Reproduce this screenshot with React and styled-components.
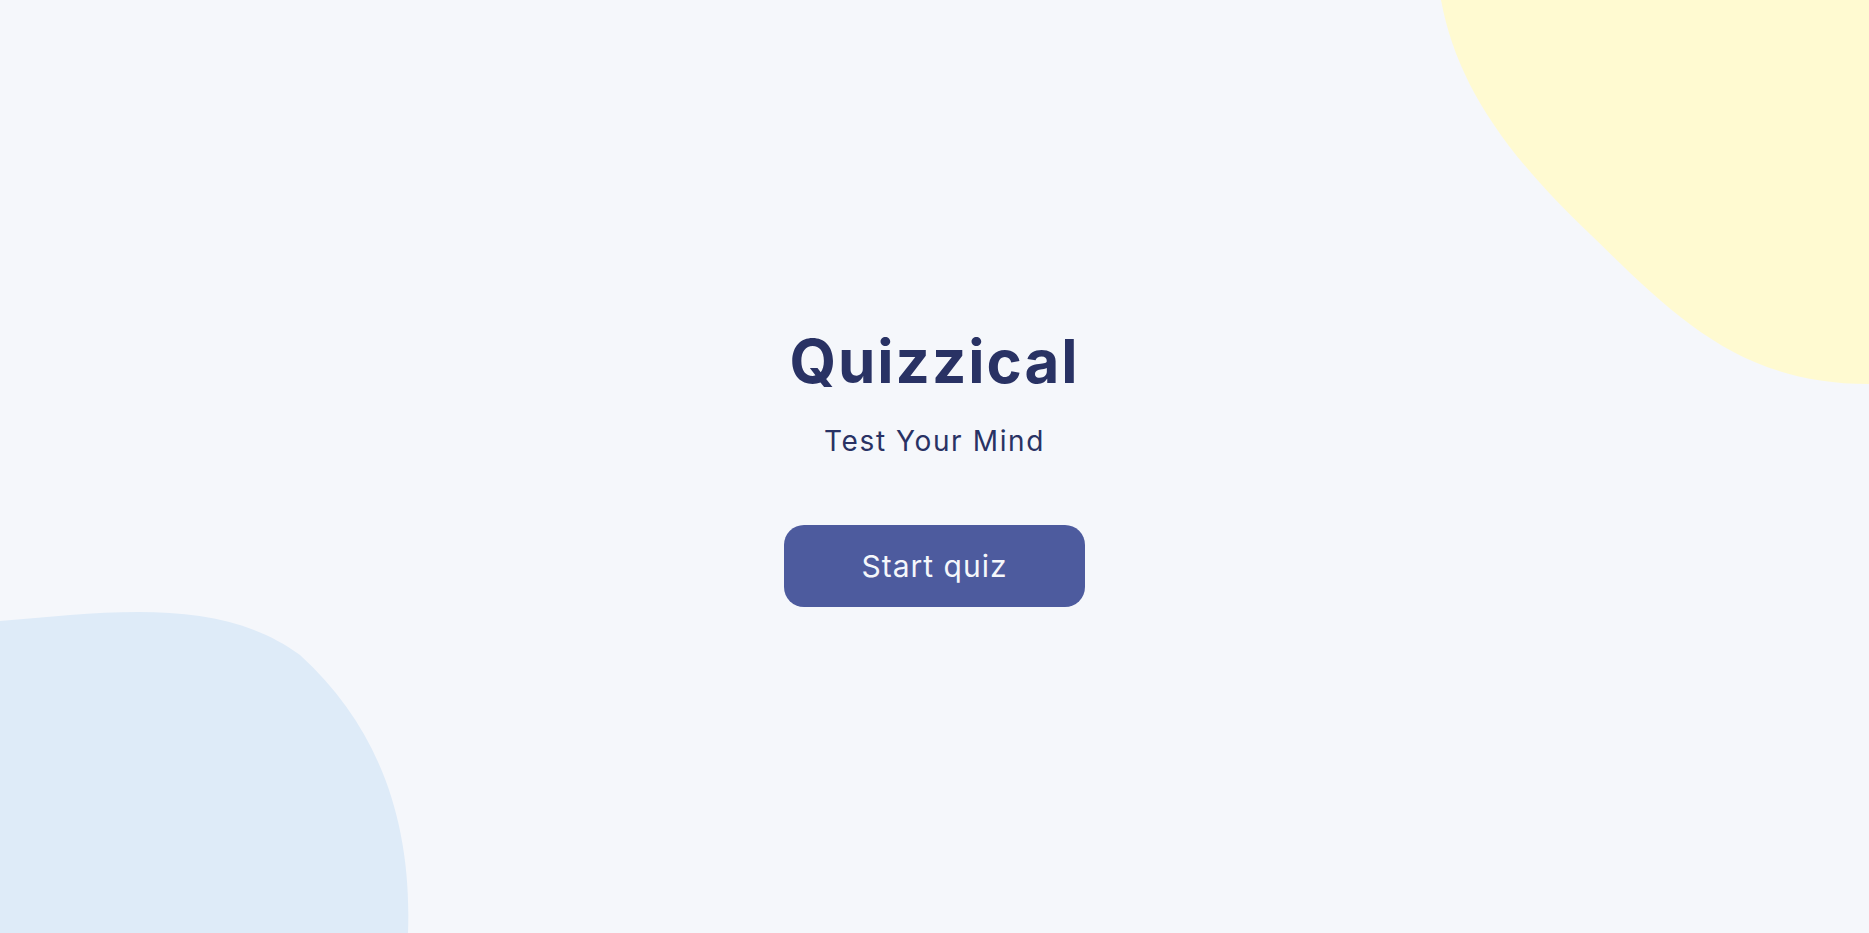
import React from 'react'
import styled, { createGlobalStyle } from 'styled-components'

const GlobalStyle = createGlobalStyle`
  html, body {
    margin: 0;
    padding: 0;
    background: #f5f7fb;
  }
  body {
    font-family: Inter, 'Noto Sans', sans-serif;
  }
`

const Page = styled.main`
  position: relative;
  height: 100vh;
  overflow: hidden;
  background-color: #f5f7fb;
  display: flex;
  flex-direction: column;
  align-items: center;
  justify-content: center;
`

const Blob = styled.svg`
  position: absolute;
  ${(p) => (p.$corner === 'top' ? 'top: 0; right: 0;' : 'bottom: 0; left: 0;')}
  z-index: 0;
`

const Intro = styled.section`
  position: relative;
  z-index: 1;
  display: flex;
  flex-direction: column;
  align-items: center;
  margin-top: -2px;
`

const Title = styled.h1`
  margin: 0;
  font-size: 60px;
  font-weight: 700;
  letter-spacing: 2px;
  color: #293264;
  line-height: 1.2;
`

const Desc = styled.p`
  margin: 27px 0 0;
  font-size: 28px;
  font-weight: 400;
  letter-spacing: 1.6px;
  color: #293264;
`

const Button = styled.button`
  margin-top: 67px;
  width: 301px;
  height: 82px;
  border: none;
  border-radius: 20px;
  background-color: #4d5b9e;
  color: #f5f7fb;
  font-family: inherit;
  font-size: 30px;
  letter-spacing: 1px;
  cursor: pointer;
`

const Quizzical = () => {
  return (
    <Page>
      <GlobalStyle />
      <Blob $corner='top' width='428' height='384' viewBox='0 0 428 384'>
        <path
          d='M0 0 C 15 80 60 150 150 235 C 235 318 300 384 428 384 L 428 0 Z'
          fill='#fffad1'
        />
      </Blob>
      <Blob $corner='bottom' width='410' height='325' viewBox='0 0 410 325'>
        <path
          d='M0 13 C 110 4 220 -12 300 47 C 380 120 412 215 408 325 L 0 325 Z'
          fill='#deebf8'
        />
      </Blob>
      <Intro>
        <Title>Quizzical</Title>
        <Desc>Test Your Mind</Desc>
        <Button>Start quiz</Button>
      </Intro>
    </Page>
  )
}

export default Quizzical
